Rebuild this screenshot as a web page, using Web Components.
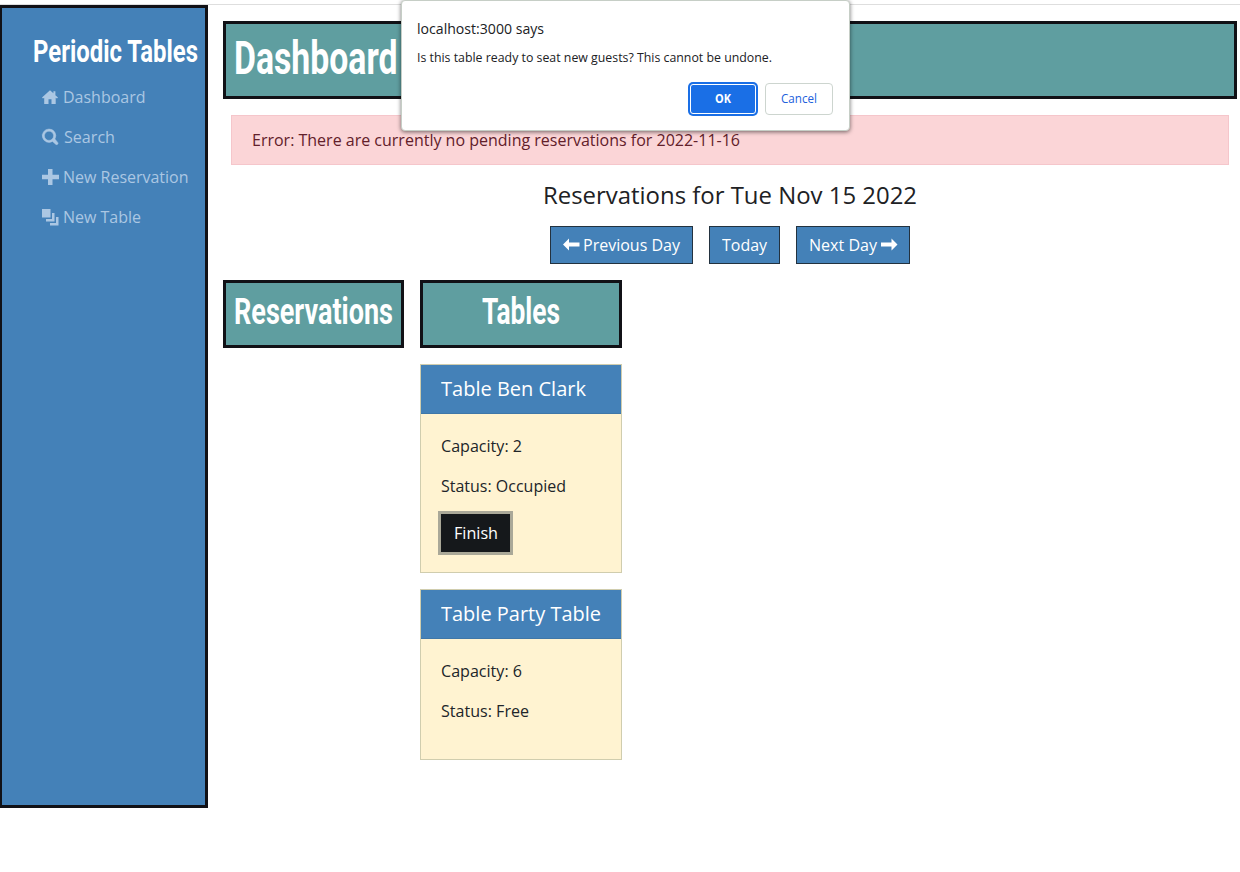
<!DOCTYPE html>
<html lang="en"><head><meta charset="utf-8"><title>Periodic Tables</title>
<style>
html,body{margin:0;height:872px;overflow:hidden;background:#fff}
body{font:16px/24px "Open Sans",sans-serif;color:#212529}
</style></head><body>
<script>
const define=(name,html,setup)=>customElements.define(name,class extends HTMLElement{
  connectedCallback(){
    if(this.shadowRoot)return;
    const t=document.createElement('template');
    t.innerHTML=typeof html==='function'?html(this):html;
    this.attachShadow({mode:'open'}).append(document.importNode(t.content,true));
    if(setup)requestAnimationFrame(()=>setup(this));
    if(setup)setup(this);
  }
});
/* One line of text scaled horizontally to an exact advance width. */
define('fit-text',el=>{
  const w=el.getAttribute('width'),s=+el.getAttribute('size'),h=+(el.getAttribute('height')||24),b=+(el.getAttribute('base')||(h/2+s*.36));
  return `<style>:host{display:flex;align-items:flex-start;flex:none;width:${w}px;height:${h}px}
  span{display:block;flex:none;white-space:nowrap;font-size:${s}px;line-height:${h}px;transform-origin:0 0}
  i{display:inline-block;width:0;height:0}</style><span data-base="${b}">${el.getAttribute('text')}<i></i></span>`;
},el=>{
  const s=el.shadowRoot.querySelector('span');
  s.style.transform='none';
  s.style.marginTop='0';
  const r=s.getBoundingClientRect();
  if(!r.width)return;
  const base=s.querySelector('i').getBoundingClientRect().bottom-r.top;
  s.style.marginTop=Math.round(+s.dataset.base-base)+'px';
  s.style.transform=`scaleX(${el.getAttribute('width')/r.width})`;
});
const icons={
 home:'<path d="M8 1.2 0 8.6l1 1L2.2 8.7V15H6.5V10.2h3V15h4.2V8.7L15 9.6l1-1-2.6-2.4V2.2h-2v2.1z"/>',
 search:'<path stroke="currentColor" stroke-width=".5" fill-rule="evenodd" d="M7 0a6.7 6.7 0 1 0 3.5 12.4l3.4 3q1 .6 1.8-.2t0-1.8L12.9 10A6.7 6.7 0 0 0 7 0m0 2.2a4.6 4.6 0 1 1 0 9.2 4.6 4.6 0 0 1 0-9.2"/>',
 plus:'<path d="M6 0h4.5v5.7H17v4.5h-6.5V16H6v-5.8H0V5.7h6z"/>',
 layers:'<path d="M0 0h8.5v8.5H0zM10 4h2.5v8.5H4V10h6zM14 8h2.5v8.5H8V14h6z"/>',
 left:'<path d="M0 7.5 6 1.5V5.6h10.5v3.8H6v4.1z"/>',
 right:'<path d="M16.5 7.5 10.5 1.5V5.6H0v3.8h10.5v4.1z"/>'
};
define('app-icon',el=>`<style>:host{display:block;flex:none;width:17px;height:17px}svg{display:block;overflow:visible}</style><svg width="17" height="17" fill="currentColor">${icons[el.getAttribute('name')]}</svg>`);
define('nav-item',`<style>:host{display:flex;align-items:center;height:40px;gap:3.5px;color:#abc7e3}</style><slot></slot>`);
define('side-bar',`<style>
:host{display:block;box-sizing:border-box;width:208px;height:803px;border:3px solid #111116;border-left-width:2px;background:#4481b8}
.brand{font-family:Roboto,sans-serif;font-weight:700;color:#fff;padding:20px 0 0 31px}
nav{padding:9px 0 0 40px}
</style>
<div class="brand"><fit-text text="Periodic Tables" width="165" size="31.6" height="40" base="34"></fit-text></div>
<nav>
<nav-item><app-icon name="home"></app-icon><fit-text text="Dashboard" width="82.5" size="16"></fit-text></nav-item>
<nav-item><app-icon name="search"></app-icon><fit-text text="Search" width="51" size="16" style="margin-left:1.5px"></fit-text></nav-item>
<nav-item><app-icon name="plus"></app-icon><fit-text text="New Reservation" width="125.5" size="16"></fit-text></nav-item>
<nav-item><app-icon name="layers"></app-icon><fit-text text="New Table" width="78" size="16"></fit-text></nav-item>
</nav>`);
define('title-box',`<style>:host{display:flex;box-sizing:border-box;border:3px solid #111116;background:#5f9ea0;color:#fff;font-family:Roboto,sans-serif;font-weight:700;padding:0 8px}</style><slot></slot>`);
define('error-alert',`<style>:host{display:block;box-sizing:border-box;height:50px;margin:16px 8px 0;padding:12px 20px;border:1px solid #f5c6cb;background:#fbd5d7;color:#62202a}</style><slot></slot>`);
define('day-button',`<style>:host{display:flex;align-items:center;justify-content:center;gap:3px;box-sizing:border-box;height:38px;border:1px solid #23323f;background:#4481b8;color:#fff}</style><slot></slot>`);
define('table-card',el=>`<style>
:host{display:block;box-sizing:border-box;width:202px;border:1px solid #d0cdae;background:#fff3d1;margin-top:16px}
header{box-sizing:border-box;height:49px;padding:12px 20px;background:#4481b8;color:#fff;border-bottom:1px solid #3f77a8}
.body{display:flex;flex-direction:column;align-items:flex-start;padding:20px;gap:16px}
</style><header><fit-text text="${el.getAttribute('name')}" width="${el.getAttribute('name-width')}" size="20"></fit-text></header><div class="body"><slot></slot></div>`);
define('finish-button',`<style>:host{display:flex;justify-content:center;align-items:center;box-sizing:border-box;width:69px;height:38px;background:#15181b;color:#fff;box-shadow:0 0 0 3px #aaa898}</style><slot></slot>`);
define('confirm-dialog',`<style>
:host{display:block;box-sizing:border-box;width:449px;height:131px;background:#fff;border:1px solid #c6cec6;border-radius:4px;box-shadow:0 1px 4px rgba(0,0,0,.55);padding:18px 16px 18px 15px;color:#202124}
.buttons{display:flex;justify-content:flex-end;gap:9px;margin-top:24px}
button{display:flex;align-items:center;justify-content:center;box-sizing:border-box;height:32px;width:68px;padding:0;border-radius:4px;font:500 12px "Open Sans",sans-serif;border:1px solid #cdd5cf;background:#fff;color:#2160dc}
.ok{background:#1a6fe6;color:#fff;font-weight:700;width:66px;height:30px;border:1px solid #fff;border-radius:3px;box-shadow:0 0 0 2px #1a6fe6;margin:1px 0}
</style>
<fit-text text="localhost:3000 says" width="127" size="14.5" height="20" base="15"></fit-text>
<fit-text text="Is this table ready to seat new guests? This cannot be undone." width="355" size="12.6" height="20" base="23"></fit-text>
<div class="buttons"><button class="ok"><fit-text text="OK" width="16" size="11.5" height="20" style="margin-right:1px"></fit-text></button><button><fit-text text="Cancel" width="36" size="12" height="20"></fit-text></button></div>`);
define('restaurant-app',`<style>
:host{display:block;position:relative;height:872px;padding-top:4px;box-sizing:border-box}
.rule{height:1px;background:#dedede}
.layout{display:flex}
main{width:1014px;margin-left:15px;padding-top:16px}
.day{margin:19px auto 0;width:374px;color:#202124}
.buttons{display:flex;justify-content:center;gap:16px;margin-top:14px}
.columns{display:flex;align-items:flex-start;gap:16px;margin-top:16px}
.columns title-box{height:68px}
.tables>title-box{justify-content:center}
confirm-dialog{position:absolute;left:401px;top:0}
</style>
<div class="rule"></div>
<div class="layout"><side-bar></side-bar>
<main>
<title-box style="height:78px"><fit-text text="Dashboard" width="163.5" size="45.5" height="72" base="50"></fit-text></title-box>
<error-alert><fit-text text="Error: There are currently no pending reservations for 2022-11-16" width="488" size="16"></fit-text></error-alert>
<div class="day"><fit-text text="Reservations for Tue Nov 15 2022" width="374" size="24" height="28" base="20"></fit-text></div>
<div class="buttons">
<day-button style="width:143px"><app-icon name="left"></app-icon><fit-text text="Previous Day" width="97" size="16"></fit-text></day-button>
<day-button style="width:71px"><fit-text text="Today" width="45" size="16"></fit-text></day-button>
<day-button style="width:114px;gap:4px"><fit-text text="Next Day" width="68" size="16"></fit-text><app-icon name="right"></app-icon></day-button>
</div>
<div class="columns">
<title-box style="width:181px"><fit-text text="Reservations" width="159" size="36" height="62" base="41"></fit-text></title-box>
<div class="tables"><title-box style="width:202px"><fit-text text="Tables" width="78" size="36" height="62" base="41"></fit-text></title-box>
<table-card name="Table Ben Clark" name-width="145" style="height:209px"><fit-text text="Capacity: 2" width="81" size="16"></fit-text><fit-text text="Status: Occupied" width="125" size="16"></fit-text><finish-button><fit-text text="Finish" width="44" size="16"></fit-text></finish-button></table-card>
<table-card name="Table Party Table" name-width="160" style="height:171px"><fit-text text="Capacity: 6" width="81" size="16"></fit-text><fit-text text="Status: Free" width="88" size="16"></fit-text></table-card>
</div></div>
</main></div>
<confirm-dialog></confirm-dialog>`);
document.body.prepend(document.createElement('restaurant-app'));
</script></body></html>
